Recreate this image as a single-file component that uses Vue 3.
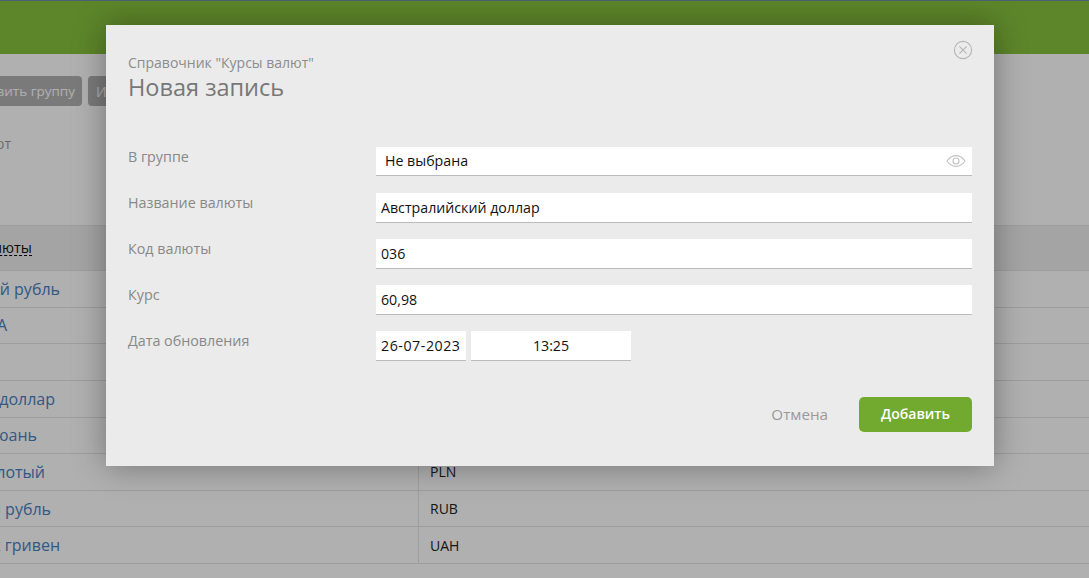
<template>
  <div class="page">
    <header class="topbar"></header>
    <div class="content">
      <div class="toolbar">
        <button class="tool-btn tool-btn--add" type="button">Добавить группу</button>
        <button class="tool-btn" type="button">Изменить</button>
      </div>
      <div class="filter-text"><span>Курс валют</span></div>
      <div class="table">
        <div class="row row--head">
          <div class="cell-name"><span class="sortable">Название валюты</span></div>
          <div class="cell-code">Код</div>
        </div>
        <div v-for="item in currencies" :key="item.code" class="row">
          <div class="cell-name" :style="{ paddingRight: 419 - item.end + 'px' }">
            <a class="link">{{ item.name }}</a>
          </div>
          <div class="cell-code">{{ item.code }}</div>
        </div>
      </div>
    </div>

    <div class="overlay">
      <div class="modal">
        <button class="modal__close" type="button" aria-label="Закрыть">
          <svg width="20" height="20" viewBox="0 0 20 20" fill="none" stroke="#b5b5b5">
            <circle cx="10" cy="10" r="8.6" stroke-width="1.1" />
            <path d="M6.4 6.4l7.2 7.2M13.6 6.4l-7.2 7.2" stroke-width="1.1" />
          </svg>
        </button>
        <div class="modal__sub">Справочник "Курсы валют"</div>
        <div class="modal__title">Новая запись</div>

        <div class="form">
          <div class="form-row">
            <label class="form-label">В группе</label>
            <div class="field field--select">
              <span>Не выбрана</span>
              <svg width="20" height="14" viewBox="0 0 20 14" fill="none" stroke="#c2c2c2" stroke-width="1.1">
                <path d="M1 7c2.400-3.600 5.400-5.400 9-5.400s6.600 1.800 9 5.400c-2.400 3.600-5.400 5.400-9 5.400S3.400 10.600 1 7z" />
                <circle cx="10" cy="7" r="3" />
              </svg>
            </div>
          </div>
          <div class="form-row">
            <label class="form-label">Название валюты</label>
            <div class="field">Австралийский доллар</div>
          </div>
          <div class="form-row">
            <label class="form-label">Код валюты</label>
            <div class="field">036</div>
          </div>
          <div class="form-row">
            <label class="form-label">Курс</label>
            <div class="field">60,98</div>
          </div>
          <div class="form-row">
            <label class="form-label">Дата обновления</label>
            <div class="date-group">
              <div class="field field--date">26-07-2023</div>
              <div class="field field--time">13:25</div>
            </div>
          </div>
        </div>

        <div class="modal__actions">
          <button class="btn-cancel" type="button">Отмена</button>
          <button class="btn-submit" type="button">Добавить</button>
        </div>
      </div>
    </div>
  </div>
</template>

<script setup>
const currencies = [
  { name: "Белорусский рубль", code: "BYN", end: 61 },
  { name: "Доллар США", code: "USD", end: 8 },
  { name: "Евро", code: "EUR", end: -10 },
  { name: "Австралийский доллар", code: "AUD", end: 56 },
  { name: "Китайский юань", code: "CNY", end: 38 },
  { name: "Польский злотый", code: "PLN", end: 46 },
  { name: "Российский рубль", code: "RUB", end: 52 },
  { name: "Сто украинских гривен", code: "UAH", end: 61 }
];
</script>

<style>
html,
body {
  margin: 0;
  height: 100%;
  overflow: hidden;
}
</style>

<style scoped>
.page {
  position: relative;
  height: 578px;
  overflow: hidden;
  background: #fff;
  font-family: "Open Sans", "Noto Sans", sans-serif;
  font-size: 14px;
  color: #222;
}

.topbar {
  height: 53px;
  background: #87c23d;
  border-top: 1px solid #6f8fa8;
}

.content {
  padding-top: 22px;
}

.toolbar {
  display: flex;
  gap: 6px;
  margin-left: -60px;
  height: 30px;
}

.tool-btn {
  height: 30px;
  padding: 0 8px;
  border: 0;
  border-radius: 4px;
  background: #b1b1b1;
  color: #fff;
  font: inherit;
  white-space: nowrap;
}

.tool-btn--add {
  width: 142px;
  padding: 0 7px 0 0;
  text-align: right;
  font-size: 13.5px;
}

.filter-text {
  display: flex;
  justify-content: flex-end;
  width: 11px;
  height: 30px;
  margin-top: 23px;
  white-space: nowrap;
  color: #999;
  line-height: 30px;
}

.filter-text span {
  flex-shrink: 0;
}

.table {
  margin-top: 66px;
}

.row {
  display: flex;
  height: 35.625px;
  border-bottom: 1px solid #e4e4e4;
  align-items: center;
  box-sizing: content-box;
}

.row--head {
  height: 44px;
  background: #eee;
  border-top: 1px solid #e4e4e4;
}

.cell-name {
  display: flex;
  justify-content: flex-end;
  flex: 0 0 419px;
  min-width: 0;
  box-sizing: border-box;
  height: 100%;
  align-items: center;
  white-space: nowrap;
  border-right: 1px solid #e4e4e4;
  font-size: 16px;
}

.cell-name > * {
  flex-shrink: 0;
}

.row--head .cell-name {
  padding-right: 387px;
  border-right: 0;
}

.sortable {
  border-bottom: 1px dashed #000;
  line-height: 15px;
  color: #111;
  font-size: 14.5px;
}

.link {
  color: #4a80c0;
}

.cell-code {
  padding-left: 11px;
  font-size: 14px;
}

.overlay {
  position: absolute;
  inset: 0;
  background: rgba(0, 0, 0, 0.31);
}

.modal {
  position: absolute;
  left: 106px;
  top: 25px;
  box-sizing: border-box;
  width: 888px;
  height: 441px;
  padding: 29px 22px 0;
  background: #ebebeb;
  box-shadow: 0 0 30px rgba(0, 0, 0, 0.35);
}

.modal__close {
  position: absolute;
  top: 15px;
  right: 21px;
  display: flex;
  padding: 0;
  border: 0;
  background: none;
}

.modal__sub {
  font-size: 14px;
  line-height: 18px;
  color: #8c8c8c;
}

.modal__title {
  font-size: 23.5px;
  line-height: 30px;
  color: #777;
}

.form {
  display: flex;
  flex-direction: column;
  gap: 16px;
  margin-top: 45px;
}

.form-row {
  display: flex;
  height: 30px;
}

.form-label {
  flex: 0 0 248px;
  font-size: 14.3px;
  line-height: 20px;
  color: #888;
}

.field {
  flex: 1;
  box-sizing: border-box;
  height: 30px;
  padding-left: 5px;
  background: #fff;
  border-bottom: 1px solid #bbb;
  font-size: 14.2px;
  line-height: 29px;
  color: #111;
}

.field--select {
  display: flex;
  align-items: center;
  justify-content: space-between;
  height: 29px;
  padding: 0 0 0 9px;
}

.field--select span {
  padding-bottom: 2px;
}

.field--select svg {
  margin-right: 6px;
}

.date-group {
  display: flex;
  gap: 5px;
}

.field--date {
  flex: 0 0 90px;
  letter-spacing: 0.55px;
}

.field--time {
  flex: 0 0 160px;
  padding-left: 0;
  text-align: center;
}

.modal__actions {
  display: flex;
  justify-content: flex-end;
  align-items: center;
  gap: 31px;
  margin-top: 36px;
}

.btn-cancel {
  padding: 0 0 2px;
  border: 0;
  background: none;
  font: inherit;
  font-size: 15.2px;
  color: #999;
}

.btn-submit {
  width: 113px;
  height: 35px;
  padding: 0 0 2px;
  border: 0;
  border-radius: 5px;
  background: #71aa2f;
  color: #fff;
  font: inherit;
  font-size: 14px;
  font-weight: 600;
}
</style>
